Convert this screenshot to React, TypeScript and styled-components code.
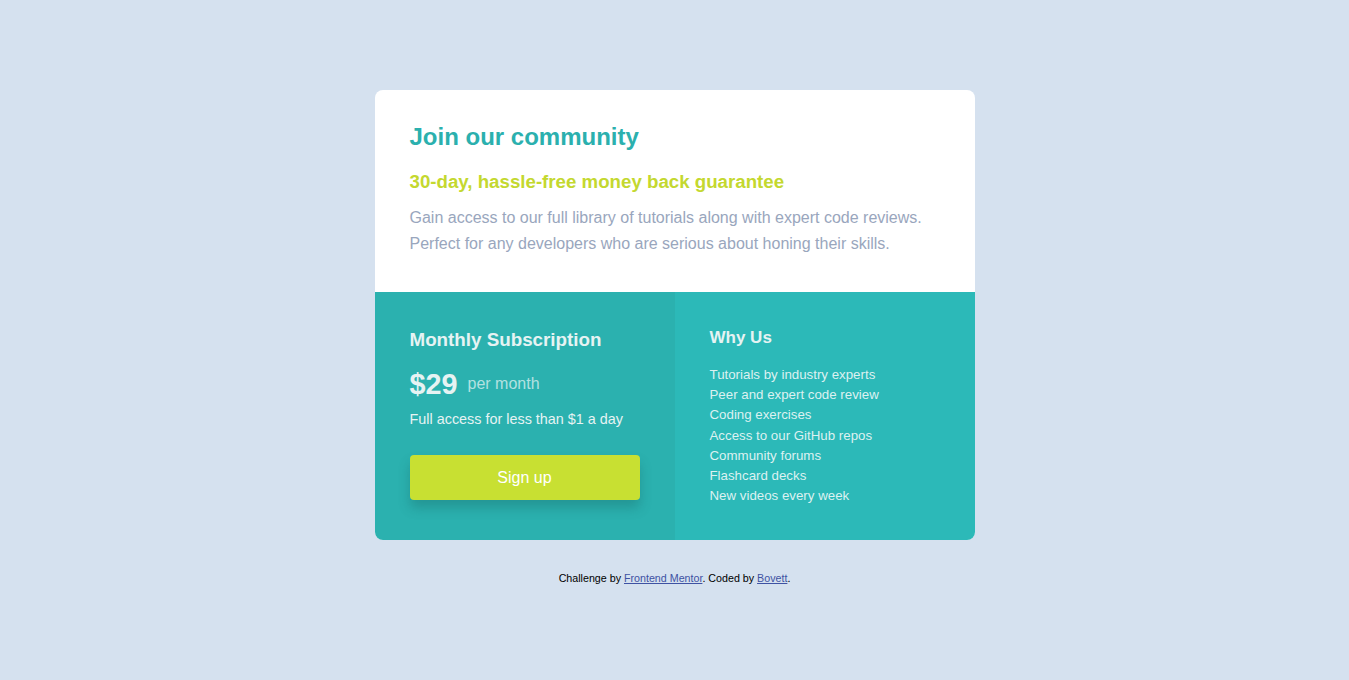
import React from 'react';
import styled, { createGlobalStyle } from 'styled-components';

const GlobalStyle = createGlobalStyle`
  body {
    margin: 0;
    background-color: #d5e1ef;
    font-family: "Liberation Sans", Arial, sans-serif;
  }
`;

const StyledPage = styled.main`
  display: flex;
  flex-direction: column;
  align-items: center;
  padding-top: 90px;
`;

const StyledCard = styled.div`
  width: 600px;
  border-radius: 8px;
  overflow: hidden;
  background-color: #fff;
`;

const StyledTop = styled.section`
  padding: 33px 35px 35px;
`;

const StyledTitle = styled.h1`
  margin: 0;
  font-size: 24px;
  line-height: 28px;
  font-weight: bold;
  color: #2bb0ae;
`;

const StyledGuarantee = styled.h2`
  margin: 20px 0 0;
  font-size: 18.7px;
  line-height: 22px;
  font-weight: bold;
  color: #c4d82f;
`;

const StyledIntro = styled.p`
  margin: 12px 0 0;
  font-size: 16px;
  line-height: 26px;
  color: #99a6bd;
`;

const StyledBottom = styled.div`
  display: grid;
  grid-template-columns: 300px 300px;
`;

const StyledColumn = styled.section<{ $light?: boolean }>`
  background-color: ${(p) => (p.$light ? '#2cb9b8' : '#2bb1af')};
  padding: ${(p) => (p.$light ? '36px 35px 29px' : '36px 35px 40px')};
  color: #e6f3f3;
`;

const StyledSubTitle = styled.h3`
  margin: 0;
  font-size: 18.8px;
  line-height: 24px;
  font-weight: bold;
`;

const StyledPriceRow = styled.div`
  display: flex;
  align-items: center;
  gap: 10px;
  margin-top: 14px;
`;

const StyledPrice = styled.span`
  font-size: 28.8px;
  line-height: 36px;
  font-weight: bold;
`;

const StyledPer = styled.span`
  font-size: 16px;
  color: #b3e1e1;
`;

const StyledAccess = styled.p`
  margin: 7px 0 0;
  font-size: 14.4px;
  line-height: 20px;
`;

const StyledSignUpButton = styled.button`
  display: block;
  width: 230px;
  height: 45px;
  margin-top: 26px;
  border: none;
  border-radius: 4px;
  background-color: #c8e032;
  color: #fff;
  font-family: "Liberation Sans", Arial, sans-serif;
  font-size: 16px;
  box-shadow: 0 8px 12px rgba(20, 90, 90, 0.3);
  cursor: pointer;
`;

const StyledWhyTitle = styled.h3`
  margin: 0;
  font-size: 17px;
  line-height: 20px;
  font-weight: bold;
`;

const StyledList = styled.ul`
  list-style: none;
  margin: 17px 0 0;
  padding: 0;
  font-size: 13.3px;
  line-height: 20.2px;
  color: #dcf1f1;
`;

const StyledFooter = styled.footer`
  margin-top: 32px;
  font-size: 10.7px;
  color: #000;
  text-align: center;

  a {
    color: #3e52a3;
  }
`;

const reasons = [
  'Tutorials by industry experts',
  'Peer and expert code review',
  'Coding exercises',
  'Access to our GitHub repos',
  'Community forums',
  'Flashcard decks',
  'New videos every week',
];

export default function App(): JSX.Element {
  return (
    <>
      <GlobalStyle />
      <StyledPage>
        <StyledCard>
          <StyledTop>
            <StyledTitle>Join our community</StyledTitle>
            <StyledGuarantee>30-day, hassle-free money back guarantee</StyledGuarantee>
            <StyledIntro>
              Gain access to our full library of tutorials along with expert code reviews.
              <br />
              Perfect for any developers who are serious about honing their skills.
            </StyledIntro>
          </StyledTop>

          <StyledBottom>
            <StyledColumn>
              <StyledSubTitle>Monthly Subscription</StyledSubTitle>
              <StyledPriceRow>
                <StyledPrice>$29</StyledPrice>
                <StyledPer>per month</StyledPer>
              </StyledPriceRow>
              <StyledAccess>Full access for less than $1 a day</StyledAccess>
              <StyledSignUpButton>Sign up</StyledSignUpButton>
            </StyledColumn>

            <StyledColumn $light>
              <StyledWhyTitle>Why Us</StyledWhyTitle>
              <StyledList>
                {reasons.map((r) => (
                  <li key={r}>{r}</li>
                ))}
              </StyledList>
            </StyledColumn>
          </StyledBottom>
        </StyledCard>

        <StyledFooter>
          Challenge by <a href="#">Frontend Mentor</a>. Coded by <a href="#">Bovett</a>.
        </StyledFooter>
      </StyledPage>
    </>
  );
}
